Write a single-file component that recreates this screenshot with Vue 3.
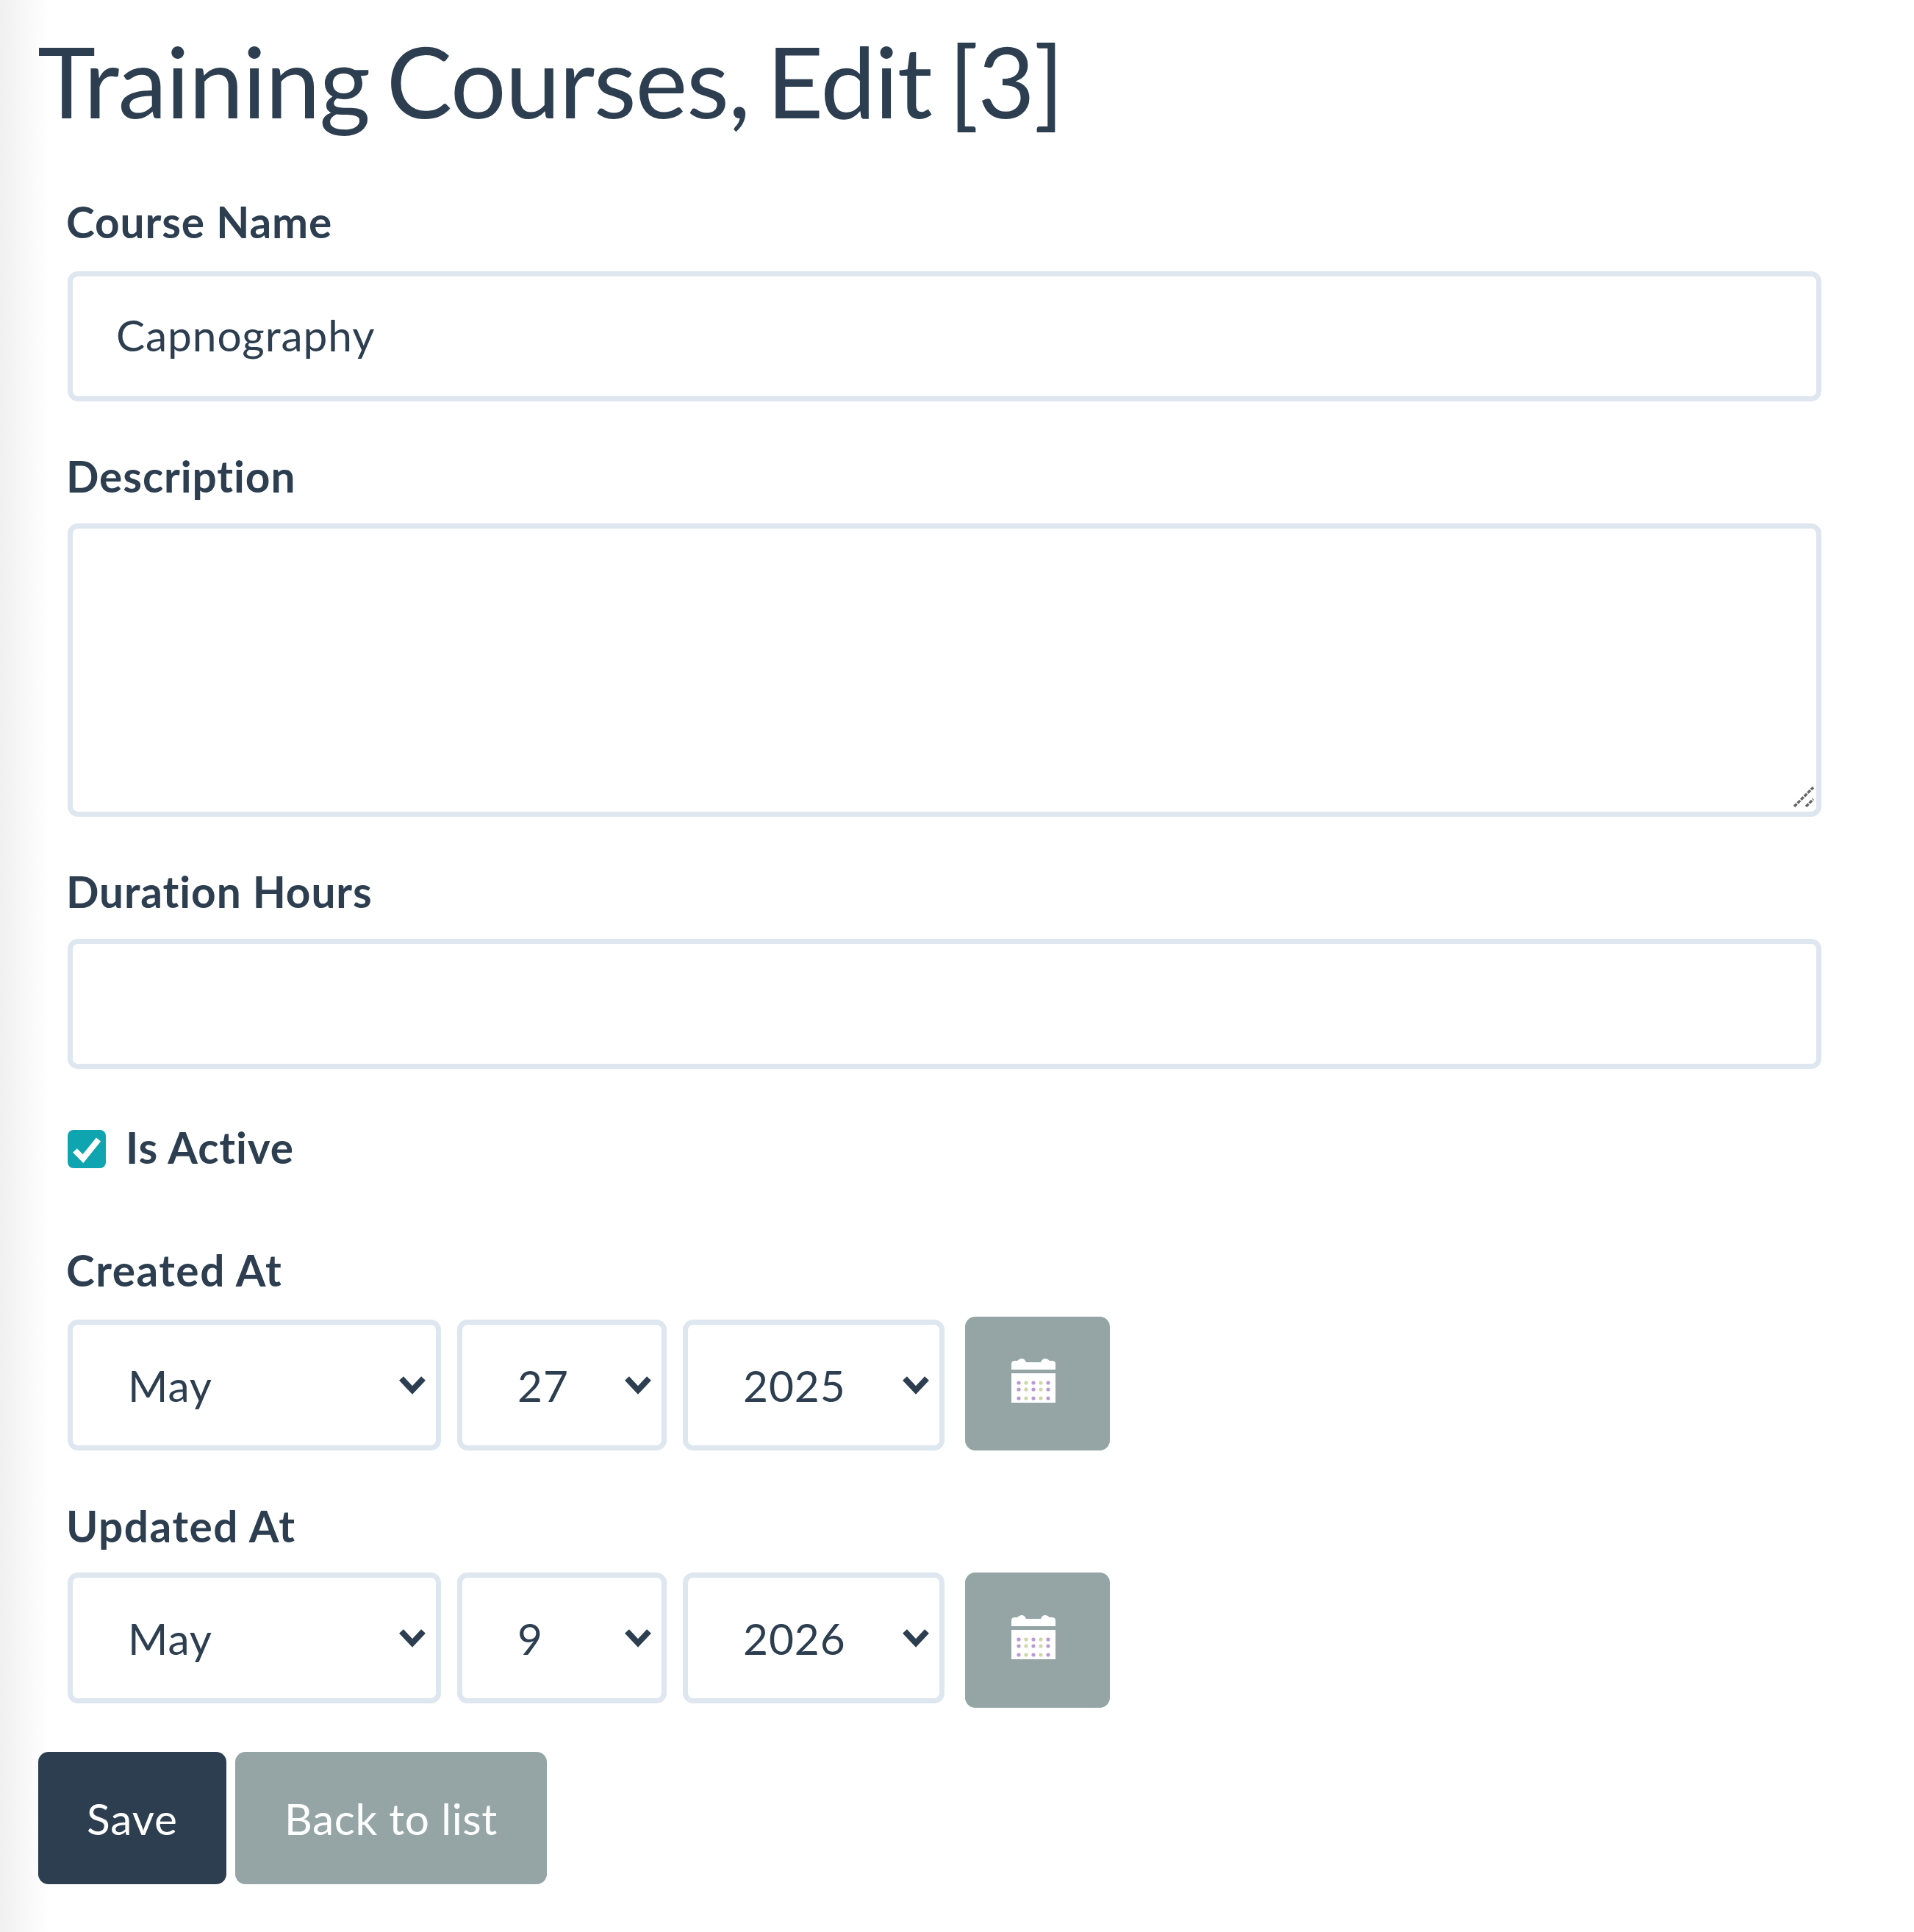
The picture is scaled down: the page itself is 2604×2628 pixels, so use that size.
<template>
  <div class="page">
    <h1 class="title">Training Courses, Edit [3]</h1>

    <form class="form" @submit.prevent>
      <div class="field">
        <label class="label">Course Name</label>
        <input v-model="course.name" class="control" type="text" />
      </div>

      <div class="field">
        <label class="label">Description</label>
        <div class="area-wrap">
          <textarea v-model="course.description" class="control area"></textarea>
          <svg class="grip" width="30" height="30" viewBox="0 0 30 30">
            <path d="M2 28 L28 2 M18 28 L28 18" stroke="#666" stroke-width="3.5" stroke-dasharray="5 1.5" fill="none" />
          </svg>
        </div>
      </div>

      <div class="field">
        <label class="label">Duration Hours</label>
        <input v-model="course.hours" class="control" type="text" />
      </div>

      <label class="check">
        <span class="check-box">
          <svg v-if="course.active" width="52" height="52" viewBox="0 0 52 52">
            <path d="M10 28 L21 39 L42 13" stroke="#fff" stroke-width="8" fill="none" />
          </svg>
        </span>
        <span>Is Active</span>
      </label>

      <div v-for="date in dates" :key="date.label" class="date-field">
        <label class="label">{{ date.label }}</label>
        <div class="date-row" :class="date.rowClass">
          <div class="select-wrap month">
            <select v-model="date.month" class="select">
              <option v-for="m in months" :key="m">{{ m }}</option>
            </select>
            <svg class="chevron" width="38" height="26" viewBox="0 0 38 26">
              <path d="M4 4 L19 20 L34 4" stroke="#2c3e50" stroke-width="8" fill="none" />
            </svg>
          </div>
          <div class="select-wrap day">
            <select v-model="date.day" class="select">
              <option v-for="d in 31" :key="d">{{ d }}</option>
            </select>
            <svg class="chevron" width="38" height="26" viewBox="0 0 38 26">
              <path d="M4 4 L19 20 L34 4" stroke="#2c3e50" stroke-width="8" fill="none" />
            </svg>
          </div>
          <div class="select-wrap year">
            <select v-model="date.year" class="select">
              <option v-for="y in years" :key="y">{{ y }}</option>
            </select>
            <svg class="chevron" width="38" height="26" viewBox="0 0 38 26">
              <path d="M4 4 L19 20 L34 4" stroke="#2c3e50" stroke-width="8" fill="none" />
            </svg>
          </div>
          <button class="cal-btn" type="button">
            <svg width="60" height="62" viewBox="0 0 60 62">
              <path d="M0 16 V8 Q0 4 5 4 H8 Q11 1 14 1 Q18 1 20 6 H40 Q42 1 46 1 Q49 1 52 4 H55 Q60 4 60 8 V16 Z" fill="#fff" />
              <rect x="0" y="21" width="60" height="40" fill="#fff" />
              <g v-for="y in [34, 43, 55]" :key="y">
                <circle v-for="(x, i) in [10, 20, 30, 40, 50]" :key="x" :cx="x" :cy="y" r="2.6" :fill="i % 2 ? '#cfd6a8' : '#b99ad2'" />
              </g>
            </svg>
          </button>
        </div>
      </div>
    </form>

    <div class="actions">
      <button class="btn save" type="button">Save</button>
      <button class="btn back" type="button">Back to list</button>
    </div>
  </div>
</template>

<script setup>
import { reactive } from 'vue'

const months = ['January', 'February', 'March', 'April', 'May', 'June', 'July', 'August', 'September', 'October', 'November', 'December']
const years = [2024, 2025, 2026, 2027]

const course = reactive({
  name: 'Capnography',
  description: '',
  hours: '',
  active: true
})

const dates = reactive([
  { label: 'Created At', month: 'May', day: 27, year: 2025, rowClass: 'row-bottom' },
  { label: 'Updated At', month: 'May', day: 9, year: 2026, rowClass: 'row-top' }
])
</script>

<style scoped>
/* the reference is an upscaled capture, hence the slight blur */
.page {
  min-height: 2628px;
  box-sizing: border-box;
  padding: 0 0 0 52px;
  background: linear-gradient(to right, #f0f0f0 0, #fff 65px);
  color: #2c3e50;
  font-family: Lato, "Open Sans", sans-serif;
  font-size: 58.6px;
  font-variant-ligatures: none;
  letter-spacing: 0.9px;
  filter: blur(0.7px);
}

.title {
  margin: 0 0 66px -1px;
  padding-top: 30px;
  height: 170px;
  line-height: 160px;
  font-size: 134px;
  font-weight: 400;
  letter-spacing: -1.3px;
  word-spacing: -10px;
}

.form {
  width: 2426px;
  padding-left: 40px;
  box-sizing: border-box;
}

.field {
  margin-bottom: 66px;
}

.label {
  display: block;
  height: 70px;
  line-height: 70px;
  margin: 0 0 30px -2px;
  font-weight: 700;
}

.field:first-child .label {
  margin-bottom: 33px;
}

.control {
  display: block;
  width: 100%;
  height: 177px;
  box-sizing: border-box;
  padding: 0 59px 6px;
  border: 7px solid #dee6ef;
  border-radius: 14px;
  background: #fff;
  color: #2c3e50;
  font: inherit;
  letter-spacing: inherit;
  outline: none;
}

.area-wrap {
  position: relative;
}

.area {
  height: 399px;
  resize: none;
}

.grip {
  position: absolute;
  right: 9px;
  bottom: 12px;
}

.check {
  display: flex;
  align-items: center;
  gap: 27px;
  height: 70px;
  margin: 71px 0 97px;
  font-weight: 700;
}

.check-box {
  width: 52px;
  height: 52px;
  margin-top: 6px;
  border-radius: 8px;
  background: #0ea5b0;
}

.check-box svg {
  display: block;
}

.date-field {
  margin-bottom: 67px;
}

.date-field .label {
  margin-bottom: 29px;
  letter-spacing: 1.5px;
}

.date-field:last-child {
  margin-bottom: 60px;
}

.date-row {
  display: flex;
  gap: 22px;
}

.row-bottom {
  align-items: flex-end;
}

.row-top {
  align-items: flex-start;
}

.select-wrap {
  position: relative;
  height: 178px;
}

.month { width: 508px; }
.day { width: 285px; }
.year { width: 356px; }

.select {
  display: block;
  width: 100%;
  height: 100%;
  box-sizing: border-box;
  padding: 0 0 0 75px;
  border: 7px solid #dee6ef;
  border-radius: 14px;
  background: #fff;
  color: #2c3e50;
  font: inherit;
  letter-spacing: inherit;
  appearance: none;
  outline: none;
}

.chevron {
  position: absolute;
  right: 20px;
  top: 76px;
  pointer-events: none;
}

.cal-btn {
  display: flex;
  width: 197px;
  height: 184px;
  box-sizing: border-box;
  margin-left: 6px;
  padding: 57px 0 0 63px;
  border: none;
  border-radius: 14px;
  background: #95a5a6;
}

.row-bottom .cal-btn {
  height: 182px;
  padding-top: 56px;
}

.actions {
  display: flex;
  gap: 12px;
}

.btn {
  height: 180px;
  box-sizing: border-box;
  padding: 0;
  border: none;
  border-radius: 14px;
  color: #fff;
  font: inherit;
  letter-spacing: inherit;
}

.save {
  width: 256px;
  background: #2c3e50;
}

.back {
  width: 424px;
  background: #95a5a6;
  letter-spacing: 0.6px;
}
</style>

<style>
body {
  background: #fff;
}
</style>
